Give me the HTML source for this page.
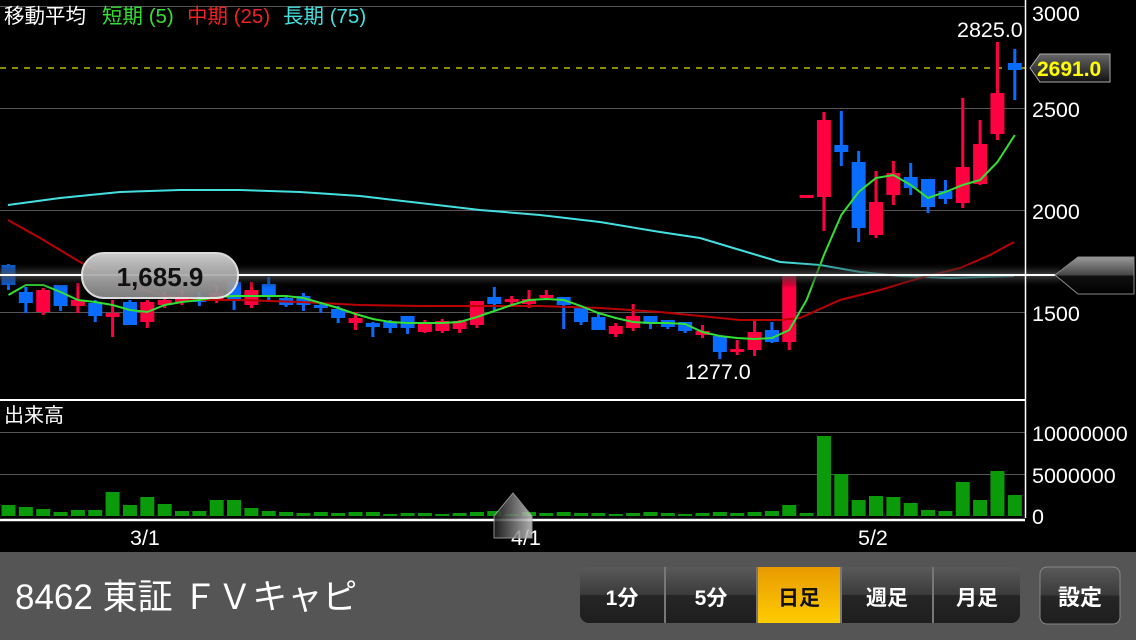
<!DOCTYPE html>
<html><head><meta charset="utf-8"><style>
html,body{margin:0;padding:0;background:#000;width:1136px;height:640px;overflow:hidden;font-family:"Liberation Sans","Noto Sans CJK JP",sans-serif}
svg{position:absolute;left:0;top:0}
</style></head><body>
<svg id="s" width="1136" height="640" xmlns="http://www.w3.org/2000/svg" font-family="Liberation Sans, Noto Sans CJK JP, sans-serif">
<defs>
<linearGradient id="glow" x1="0" y1="0" x2="0" y2="1">
<stop offset="0" stop-color="#000" stop-opacity="0"/><stop offset="0.5" stop-color="#555"/><stop offset="1" stop-color="#000" stop-opacity="0"/></linearGradient>
<linearGradient id="bub" x1="0" y1="0" x2="0" y2="1"><stop offset="0" stop-color="#ddd"/><stop offset="0.5" stop-color="#aaa"/><stop offset="1" stop-color="#888"/></linearGradient>
<linearGradient id="ptr" x1="0" y1="0" x2="0" y2="1"><stop offset="0" stop-color="#999"/><stop offset="0.5" stop-color="#444"/><stop offset="0.5" stop-color="#111"/><stop offset="1" stop-color="#000"/></linearGradient>
<linearGradient id="tag" x1="0" y1="0" x2="0" y2="1"><stop offset="0" stop-color="#666"/><stop offset="1" stop-color="#111"/></linearGradient>
<linearGradient id="hdl" x1="0" y1="0" x2="1" y2="0"><stop offset="0" stop-color="#222"/><stop offset="0.5" stop-color="#777"/><stop offset="1" stop-color="#ccc"/></linearGradient>
<linearGradient id="btn" x1="0" y1="0" x2="0" y2="1"><stop offset="0" stop-color="#5a5a5a"/><stop offset="0.5" stop-color="#3a3a3a"/><stop offset="0.5" stop-color="#262626"/><stop offset="1" stop-color="#1e1e1e"/></linearGradient>
<linearGradient id="act" x1="0" y1="0" x2="0" y2="1"><stop offset="0" stop-color="#e89a00"/><stop offset="1" stop-color="#ffcc00"/></linearGradient>
</defs>
<g stroke="#555" stroke-width="1">
<line x1="0" y1="6.5" x2="1025" y2="6.5"/><line x1="0" y1="108.5" x2="1025" y2="108.5"/><line x1="0" y1="210.5" x2="1025" y2="210.5"/><line x1="0" y1="312.5" x2="1025" y2="312.5"/>
<line x1="0" y1="432.5" x2="1025" y2="432.5"/><line x1="0" y1="474.5" x2="1025" y2="474.5"/>
</g>
<line x1="0" y1="68" x2="1025" y2="68" stroke="#dd0" stroke-width="1.2" stroke-dasharray="6,6"/>
<g id="vol" fill="#0a9a0a"></g>
<g id="cand"></g>
<polyline id="cy" fill="none" stroke="#44e0e0" stroke-width="2"/>
<polyline id="rd" fill="none" stroke="#b00" stroke-width="2"/>
<polyline id="gr" fill="none" stroke="#33e033" stroke-width="2"/>
<rect x="0" y="262" width="1060" height="26" fill="url(#glow)" opacity="0.8"/>
<line x1="0" y1="275" x2="1058" y2="275" stroke="#fff" stroke-width="2"/>
<rect x="82" y="253" width="156" height="45" rx="22" fill="url(#bub)" stroke="#eee" stroke-width="2" opacity="0.92"/>
<text x="160" y="286" text-anchor="middle" font-size="26" font-weight="bold" fill="#111">1,685.9</text>
<path d="M1055 275 L1078 257 L1134 257 L1134 294 L1078 294 Z" fill="url(#ptr)" stroke="#888" stroke-width="1"/>
<line x1="1025.5" y1="0" x2="1025.5" y2="518" stroke="#fff" stroke-width="1.5"/>
<line x1="0" y1="400" x2="1025" y2="400" stroke="#fff" stroke-width="2"/>
<line x1="0" y1="520" x2="1025" y2="520" stroke="#fff" stroke-width="2.5"/>
<g fill="#fff" font-size="21.5">
<text x="1032" y="21">3000</text><text x="1032" y="117">2500</text><text x="1032" y="219">2000</text><text x="1032" y="321">1500</text>
<text x="1032" y="441">10000000</text><text x="1032" y="483">5000000</text><text x="1032" y="524">0</text>
<text x="957" y="37">2825.0</text><text x="685" y="379">1277.0</text>
<text x="130" y="545">3/1</text><text x="511" y="545">4/1</text><text x="858" y="545">5/2</text>
<text x="4" y="422" font-size="20">出来高</text>
</g>
<g font-size="20.5"><text x="4" y="23" fill="#fff">移動平均</text><text x="102" y="23" fill="#33e033">短期 (5)</text><text x="187" y="23" fill="#e22">中期 (25)</text><text x="283" y="23" fill="#44e0e0">長期 (75)</text></g>
<path d="M1030 68 L1040 54 L1110 54 L1110 82 L1040 82 Z" fill="url(#tag)" stroke="#aaa"/>
<text x="1037" y="76" font-size="21" font-weight="bold" fill="#ff0">2691.0</text>
<path d="M513 493 L532 516 L532 538 L494 538 L494 516 Z" fill="url(#hdl)" stroke="#aaa" opacity="0.85"/>
<rect x="0" y="552" width="1136" height="88" fill="#555"/>
<text x="15" y="609" font-size="35" fill="#fff">8462 東証 ＦＶキャピ</text>
<rect x="580" y="567" width="440" height="56" rx="9" fill="url(#btn)"/>
<rect x="758" y="567" width="82" height="56" fill="url(#act)"/>
<g stroke="#777" stroke-width="2"><line x1="665" y1="567" x2="665" y2="623"/><line x1="757" y1="567" x2="757" y2="623"/><line x1="841" y1="567" x2="841" y2="623"/><line x1="933" y1="567" x2="933" y2="623"/></g>
<g font-size="21" font-weight="bold" text-anchor="middle"><text x="622" y="605" fill="#fff">1分</text><text x="711" y="605" fill="#fff">5分</text><text x="799" y="605" fill="#111">日足</text><text x="887" y="605" fill="#fff">週足</text><text x="977" y="605" fill="#fff">月足</text></g>
<rect x="1040" y="567" width="80" height="57" rx="7" fill="url(#btn)" stroke="#888"/>
<text x="1080" y="605" font-size="22" font-weight="bold" fill="#fff" text-anchor="middle">設定</text>
</svg>
<script>
var C=[['b',265,285,264,290],['b',292,303,287,313],['r',290,312,288,315],['b',285,306,285,311],['r',300,306,283,313],['b',303,316,300,322],['r',313,317,300,337],['b',302,325,300,325],['r',302,322,300,328],['r',300,305,292,308],['r',297,302,290,305],['b',298,302,292,306],['r',293,300,285,303],['b',282,300,278,310],['r',290,305,282,308],['b',284,297,277,300],['b',298,305,295,307],['b',296,305,293,311],['b',305,308,302,313],['b',309,318,306,323],['r',318,323,312,330],['b',323,327,322,337],['b',322,328,320,333],['b',316,328,316,334],['r',322,332,320,333],['r',321,331,319,333],['r',321,329,320,333],['r',301,325,301,328],['b',297,304,287,310],['r',299,302,296,306],['r',299,304,290,308],['r',295,298,290,300],['b',297,305,297,329],['b',308,322,308,325],['b',317,330,313,330],['r',326,334,323,337],['r',316,328,304,331],['b',316,324,316,329],['b',320,327,320,329],['b',322,331,322,333],['r',331,335,325,338],['b',336,352,336,359],['r',349,352,340,355],['r',332,350,319,356],['b',330,342,322,343],['r',276,342,276,350],['r',195,197,195,197],['r',120,197,112,231],['b',145,152,111,166],['b',162,228,151,242],['r',202,235,171,238],['r',173,195,161,205],['b',177,188,163,195],['b',179,207,179,213],['b',191,199,180,204],['r',167,203,98,208],['r',144,184,120,185],['r',93,134,42,140],['b',63,70,49,100]];
var V=[505,507,509,512,510,510,492,505,497,504,511,511,500,500,508,511,512,513,512,513,512,512,514,513,513,514,513,512,511,514,512,513,512,513,513,514,513,512,513,514,513,512,513,512,511,505,513,436,474,500,496,497,503,510,511,482,500,471,495];
var h='',v='';
C.forEach(function(c,i){var x=8.5+17.35*i,col=c[0]=='r'?'#ff0040':'#0a6cff';
h+='<line x1="'+x+'" y1="'+c[3]+'" x2="'+x+'" y2="'+c[4]+'" stroke="'+col+'" stroke-width="3"/>';
h+='<rect x="'+(x-7)+'" y="'+c[1]+'" width="14" height="'+Math.max(3,c[2]-c[1])+'" fill="'+col+'"/>';
v+='<rect x="'+(x-7)+'" y="'+V[i]+'" width="14" height="'+(516-V[i])+'"/>';});
document.getElementById('cand').innerHTML=h;document.getElementById('vol').innerHTML=v;
var G=[295,285,285,292,300,302,305,310,312,305,302,300,297,296,296,296,296,298,303,308,314,319,322,323,323,323,322,317,311,305,300,299,300,306,313,318,322,323,323,324,332,336,338,339,338,330,300,255,215,192,178,175,185,198,192,185,180,162,135];
document.getElementById('gr').setAttribute('points',G.map(function(y,i){return (8.5+17.35*i)+','+y}).join(' '));
document.getElementById('rd').setAttribute('points','8,220 40,238 80,262 120,282 160,295 200,300 240,300 300,302 360,305 420,306 480,306 540,306 600,308 660,312 700,316 740,320 780,320 800,318 840,300 880,290 920,278 960,268 990,255 1014,242');
document.getElementById('cy').setAttribute('points','8,205 60,198 120,192 180,190 240,190 300,192 360,196 420,203 480,210 540,215 600,222 660,232 700,238 740,250 780,262 820,265 860,272 900,276 950,278 1014,276');
</script>
</body></html>
